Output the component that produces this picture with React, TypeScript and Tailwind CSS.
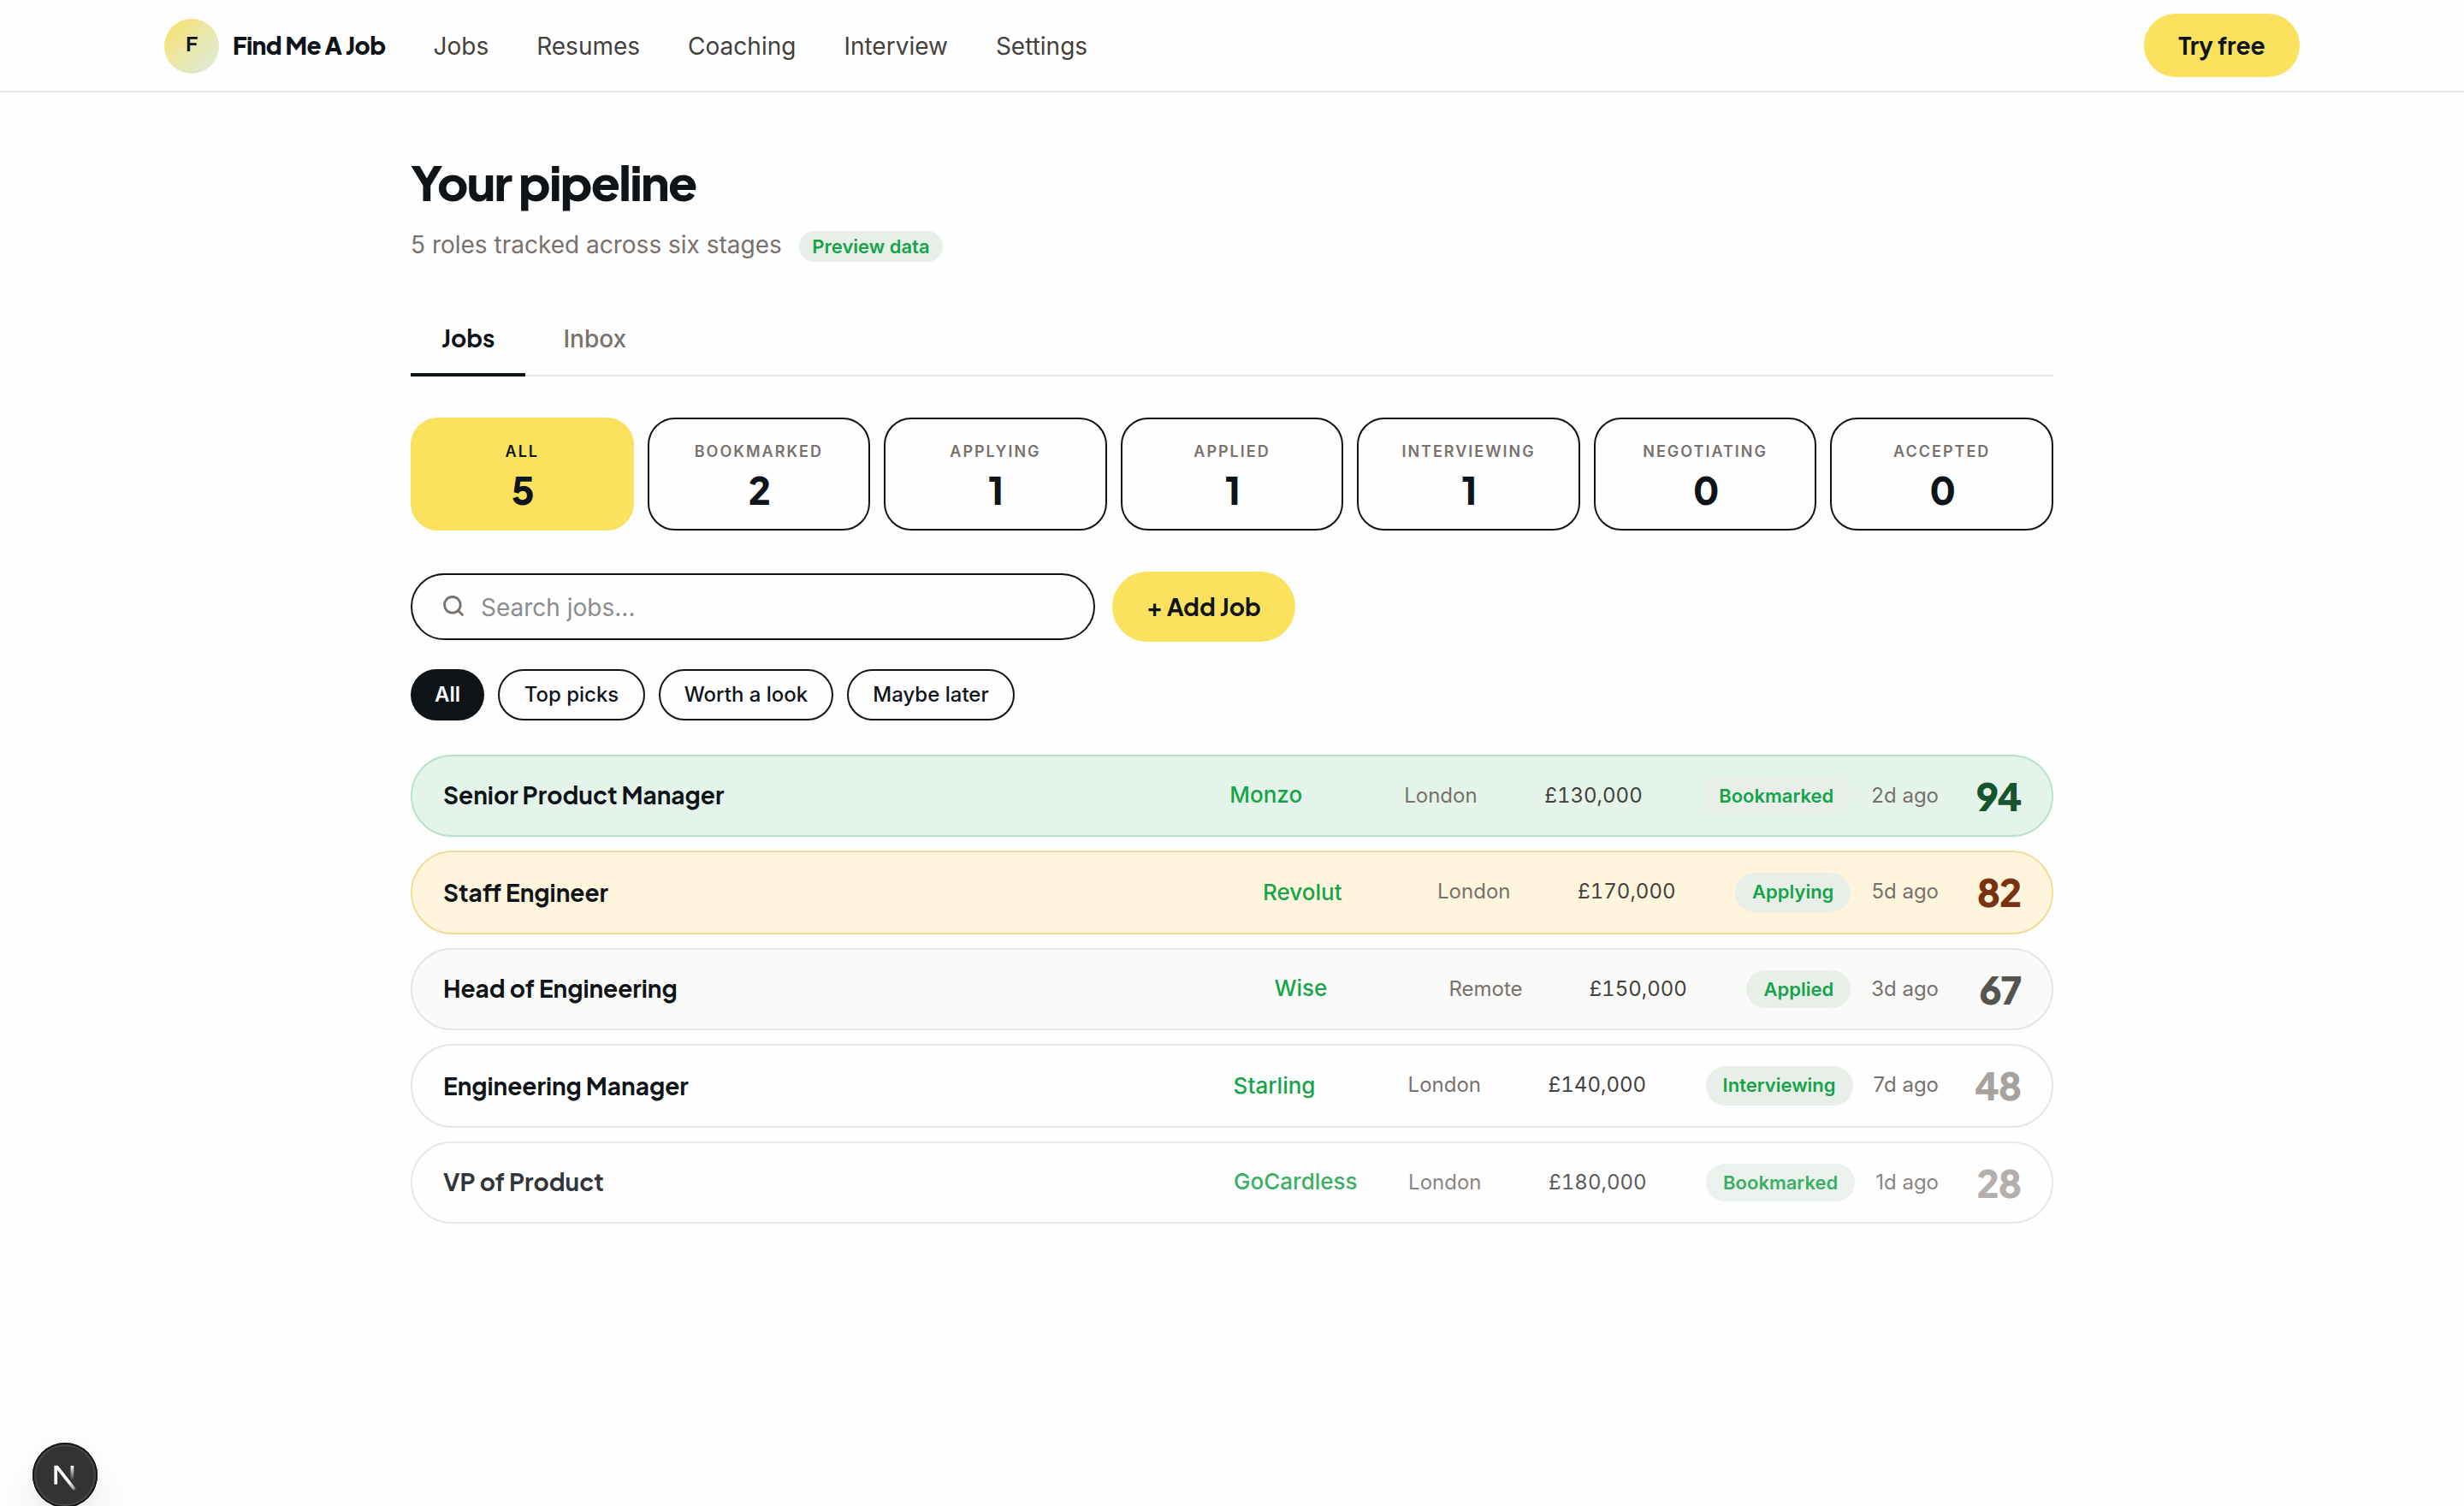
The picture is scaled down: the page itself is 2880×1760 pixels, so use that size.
import React from "react";
import { Search } from "lucide-react";

const display = "font-['Plus_Jakarta_Sans','Inter',sans-serif]";

const navItems = ["Jobs", "Resumes", "Coaching", "Interview", "Settings"];

const stages = [
  { label: "All", count: 5, active: true },
  { label: "Bookmarked", count: 2 },
  { label: "Applying", count: 1 },
  { label: "Applied", count: 1 },
  { label: "Interviewing", count: 1 },
  { label: "Negotiating", count: 0 },
  { label: "Accepted", count: 0 },
];

const filters = [
  { label: "Top picks", width: "w-[172px]" },
  { label: "Worth a look", width: "w-[204px]" },
  { label: "Maybe later", width: "w-[196px]" },
];

type Job = {
  title: string;
  company: string;
  place: string;
  salary: string;
  stage: string;
  age: string;
  score: number;
  tall: boolean;
  row: string;
  scoreColor: string;
};

const jobs: Job[] = [
  { title: "Senior Product Manager", company: "Monzo", place: "London", salary: "£130,000", stage: "Bookmarked", age: "2d ago", score: 94, tall: false, row: "bg-[#e4f4ea] border-[#b9e0c8]", scoreColor: "text-[#16532f]" },
  { title: "Staff Engineer", company: "Revolut", place: "London", salary: "£170,000", stage: "Applying", age: "5d ago", score: 82, tall: true, row: "bg-[#fff5dc] border-[#f1dc95]", scoreColor: "text-[#7a3310]" },
  { title: "Head of Engineering", company: "Wise", place: "Remote", salary: "£150,000", stage: "Applied", age: "3d ago", score: 67, tall: false, row: "bg-[#fafaf8] border-[#e5e5e5]", scoreColor: "text-[#57534e]" },
  { title: "Engineering Manager", company: "Starling", place: "London", salary: "£140,000", stage: "Interviewing", age: "7d ago", score: 48, tall: true, row: "bg-[#fefefe] border-[#e5e5e5]", scoreColor: "text-[#a8a29e]" },
  { title: "VP of Product", company: "GoCardless", place: "London", salary: "£180,000", stage: "Bookmarked", age: "1d ago", score: 28, tall: false, row: "bg-[#fefefe] border-[#e5e5e5] opacity-85", scoreColor: "text-[#a8a29e]" },
];

function Header() {
  return (
    <header className="h-[108px] border-b-2 border-[#e5e5e5] bg-[#fefefe] px-48">
      <div className="flex h-full items-center">
        <a className="flex items-center gap-4">
          <span className={`mt-[2px] flex h-16 w-16 items-center justify-center rounded-full bg-linear-135 from-[#fae15e] to-[#d9ebdf] pb-[8px] text-[24px] leading-none font-bold ${display}`}>F</span>
          <span className={`text-[28px] leading-10 font-extrabold tracking-[-0.02em] ${display}`}>Find Me A Job</span>
        </a>
        <nav className="ml-14 flex gap-14 pt-[2px] text-[28px] leading-10 text-[#44403c]">
          {navItems.map((n) => (
            <a key={n}>{n}</a>
          ))}
        </nav>
        <button className={`ml-auto h-[74px] w-[182px] rounded-full bg-[#fae15e] text-[28px] leading-10 font-bold ${display}`}>Try free</button>
      </div>
    </header>
  );
}

function StageCards() {
  return (
    <div className="mt-12 grid grid-cols-7 gap-4">
      {stages.map((s) => (
        <button
          key={s.label}
          className={`flex h-[132px] flex-col items-center rounded-[32px] border-2 pt-[27px] ${s.active ? "border-[#fae15e] bg-[#fae15e]" : "border-[#0f1419] bg-[#fefefe]"}`}
        >
          <span className={`text-[18px] leading-[22px] font-semibold tracking-[2px] uppercase ${s.active ? "text-[#0f1419]" : "text-[#78716c]"}`}>{s.label}</span>
          <span className={`mt-[11px] pl-[2px] text-[44px] leading-[44px] font-extrabold ${display}`}>{s.count}</span>
        </button>
      ))}
    </div>
  );
}

function JobRow({ job }: { job: Job }) {
  const small = job.tall ? "pb-[2px]" : "";
  const large = job.tall ? "" : "pb-[2px]";
  return (
    <div className={`flex items-center gap-6 rounded-full border-2 px-9 ${job.tall ? "h-[98px]" : "h-24"} ${job.row}`}>
      <span className={`flex-1 text-[28px] leading-10 font-bold ${large} ${display}`}>{job.title}</span>
      <span className={`w-[180px] text-[26px] leading-10 font-medium text-[#16a34a] ${large}`}>{job.company}</span>
      <span className={`w-[140px] text-[24px] leading-9 text-[#78716c] ${small}`}>{job.place}</span>
      <span className={`w-[160px] text-[24px] leading-9 text-[#44403c] tabular-nums ${small}`}>{job.salary}</span>
      <span className={`flex items-center rounded-full bg-[#e8efe9] px-5 text-[22px] leading-8 font-semibold text-[#16a34a] ${job.tall ? "h-[46px] pb-[2px]" : "h-11"}`}>{job.stage}</span>
      <span className={`text-[24px] leading-9 text-[#78716c] ${small}`}>{job.age}</span>
      <span className={`w-[72px] text-right text-[44px] leading-[52px] font-extrabold tracking-[-0.03em] ${small} ${display} ${job.scoreColor}`}>{job.score}</span>
    </div>
  );
}

function DevBadge() {
  return (
    <div className="fixed -bottom-[2px] left-[38px] flex h-[76px] w-[76px] items-center justify-center rounded-full bg-[#333333] shadow-[inset_0_0_0_2px_#171717,inset_0_0_0_4px_#484848,0_32px_64px_-16px_rgba(0,0,0,0.24),0_0_60px_rgba(0,0,0,0.03)]">
      <svg width="76" height="76" viewBox="0 0 76 76" fill="none">
        <defs>
          <linearGradient id="diag" gradientUnits="userSpaceOnUse" x1="42" y1="46" x2="51" y2="57">
            <stop stopColor="white" />
            <stop offset="0.6" stopColor="white" stopOpacity="0.6" />
            <stop offset="1" stopColor="white" stopOpacity="0" />
          </linearGradient>
          <linearGradient id="stem" gradientUnits="userSpaceOnUse" x1="46" y1="27" x2="46" y2="44">
            <stop stopColor="white" />
            <stop offset="1" stopColor="white" stopOpacity="0" />
          </linearGradient>
          <clipPath id="top">
            <rect x="24" y="26.7" width="28" height="30" />
          </clipPath>
        </defs>
        <g clipPath="url(#top)" strokeWidth="3.7">
          <path d="M49.4 54.9 L27.2 26.5 V48.7" stroke="url(#diag)" />
          <path d="M46.4 26.7 V49" stroke="url(#stem)" />
        </g>
      </svg>
    </div>
  );
}

export default function App() {
  return (
    <div className="h-[1760px] w-full overflow-hidden bg-[#fefefe] font-['Inter',sans-serif] text-[#0f1419]">
      <Header />
      <main className="mx-auto w-[1920px] pt-[72px]">
        <h1 className={`text-[56px] leading-[64px] font-extrabold tracking-[-0.03em] ${display}`}>Your pipeline</h1>
        <div className="mt-[21px] flex items-start gap-5">
          <p className="text-[28px] leading-[42px] text-[#78716c]">5 roles tracked across six stages</p>
          <span className="mt-[5px] flex h-9 items-center rounded-full bg-[#e8efe9] px-[15.5px] text-[22px] leading-8 font-semibold text-[#16a34a]">Preview data</span>
        </div>

        <div className="mt-[43px] flex gap-2 border-b-2 border-[#e5e5e5]">
          <button className={`-mb-[2px] h-[90px] border-b-4 border-[#0f1419] px-9 pt-1 text-[28px] leading-10 font-bold ${display}`}>Jobs</button>
          <button className="-mb-[2px] h-[90px] border-b-4 border-transparent px-9 pt-1.5 text-[28px] leading-10 font-medium text-[#78716c]">Inbox</button>
        </div>

        <StageCards />

        <div className="mt-12 flex h-[82px] items-center gap-5">
          <label className="flex h-[78px] w-[800px] items-center gap-[18px] rounded-full border-2 border-[#0f1419] bg-[#fefefe] px-[34px]">
            <Search size={28} strokeWidth={2.4} className="mb-[2px] shrink-0 text-[#78716c]" />
            <input className="w-full bg-transparent pt-[2px] text-[28px] leading-10 outline-none placeholder:text-[#8a8d8f]" placeholder="Search jobs..." />
          </label>
          <button className={`h-full w-[214px] rounded-full bg-[#fae15e] text-[28px] leading-10 font-bold ${display}`}>+ Add Job</button>
        </div>

        <div className="mt-8 flex gap-4 text-[24px] leading-9">
          <button className="h-[60px] w-[86px] rounded-full bg-[#0f1419] font-semibold text-white">All</button>
          {filters.map((f) => (
            <button key={f.label} className={`h-[60px] rounded-full border-2 border-[#0f1419] bg-[#fefefe] font-medium ${f.width}`}>
              {f.label}
            </button>
          ))}
        </div>

        <div className="mt-10 flex flex-col gap-4">
          {jobs.map((j) => (
            <JobRow key={j.title} job={j} />
          ))}
        </div>
      </main>
      <DevBadge />
    </div>
  );
}
